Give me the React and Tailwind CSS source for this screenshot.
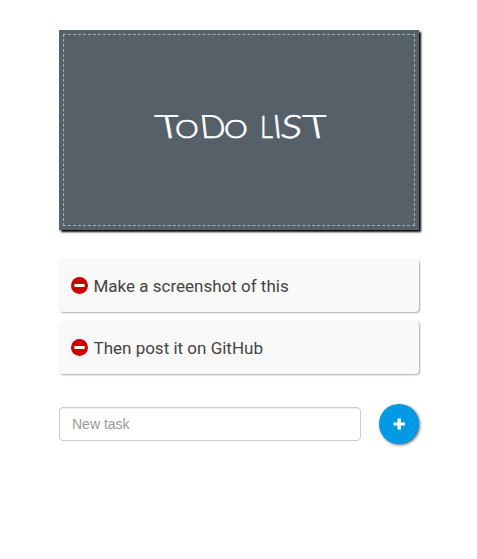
const tasks = ["Make a screenshot of this", "Then post it on GitHub"];

function MinusIcon() {
  return (
    <svg className="h-[17px] w-[17px] shrink-0" viewBox="0 0 17 17">
      <circle cx="8.5" cy="8.5" r="8.5" fill="#cc0000" />
      <rect x="3.4" y="7" width="10.2" height="3" fill="#fff" />
    </svg>
  );
}

export default function App() {
  return (
    <main className="min-h-[559px] bg-white pl-[59px] pt-[30px] font-[Roboto,sans-serif]">
      <div className="w-[360px]">
        <header className="h-[200px] bg-[#566069] p-1 shadow-[2px_2px_2px_#000]">
          <div className="flex h-full items-start border border-dashed border-[#9ab0bd] pl-[92px] pt-[71px]">
            <h1 className="whitespace-nowrap font-[Lato,sans-serif] text-[32px] leading-[40px] font-light text-white [-webkit-text-stroke:0.7px_white]">
              <span className="inline-block w-[19px] origin-left scale-x-[1.3] skew-x-8">T</span>
              <span className="inline-block w-[25px] text-[25px] origin-left scale-x-[1.2]">O</span>
              <span className="inline-block w-[24px] origin-left scale-x-[1.05] skew-x-6">D</span>
              <span className="inline-block w-[29px] text-[25px] origin-left scale-x-[1.2]">O</span>
              <span className="inline-block w-[7px]"> </span>
              <span className="inline-block w-[13px] origin-left scale-x-[0.8]">L</span>
              <span className="inline-block w-[8px] origin-left skew-x-6">I</span>
              <span className="inline-block w-[23px] origin-left scale-x-[1.25] -skew-x-6">S</span>
              <span className="inline-block w-[24px] origin-left scale-x-[1.3] skew-x-8">T</span>
            </h1>
          </div>
        </header>
        <ul className="mt-[29px] flex flex-col gap-[9px]">
          {tasks.map((task) => (
            <li key={task} className="flex h-[53px] items-center gap-[5.5px] rounded-[4px] bg-[#f9f9f9] pl-3 text-[17px] text-[#444] shadow-[1px_1px_2px_#aaa]">
              <MinusIcon />
              <span className="pt-[2px]">{task}</span>
            </li>
          ))}
        </ul>
        <form className="mt-[30px] flex items-center justify-between">
          <input
            placeholder="New task"
            className="h-[34px] w-[302px] rounded-[4px] border border-[#ccc] bg-white px-3 font-['Liberation_Sans',sans-serif] text-[14px] text-[#555] shadow-[inset_0_1px_1px_rgba(0,0,0,0.075)] placeholder:text-[#999]"
          />
          <button type="button" aria-label="Add task" className="flex size-10 items-center justify-center rounded-full bg-[#0099e5] shadow-[1px_1px_3px_#666]">
            <svg className="size-3" viewBox="0 0 12 12">
              <path d="M4.5 0.5h3.5v4h4v3h-4v4h-3.5v-4h-4v-3h4z" fill="#fff" />
            </svg>
          </button>
        </form>
      </div>
    </main>
  );
}
